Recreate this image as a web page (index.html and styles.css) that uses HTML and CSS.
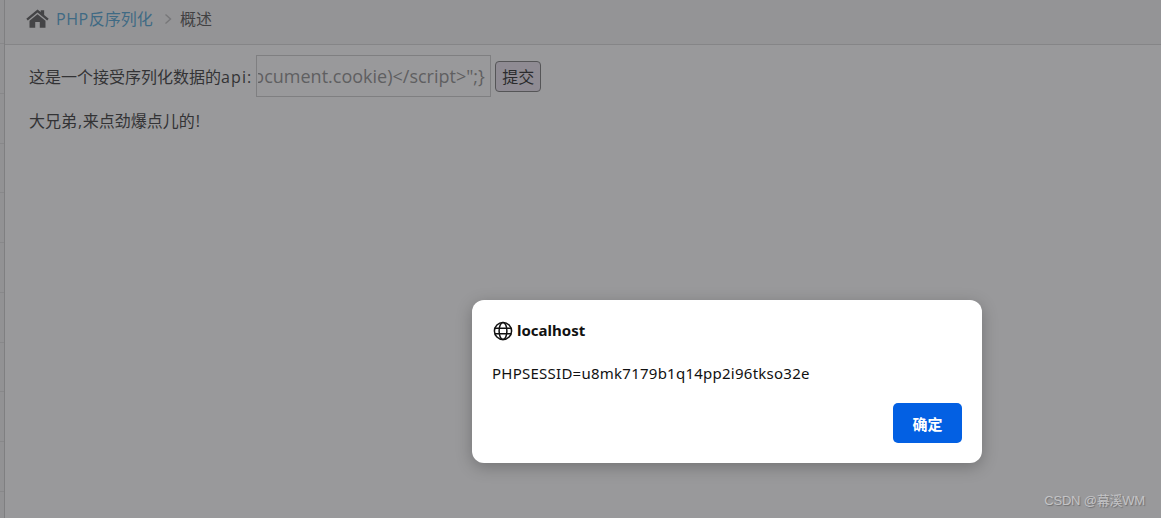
FILE: index.html
```html
<!DOCTYPE html>
<html lang="zh">
<head>
<meta charset="utf-8">
<title>PHP反序列化</title>
<link rel="stylesheet" href="styles.css">
</head>
<body>
<div class="page">
  <aside class="side">
    <div class="tick t1"></div><div class="tick"></div><div class="tick"></div><div class="tick"></div><div class="tick"></div><div class="tick"></div><div class="tick"></div><div class="tick"></div><div class="tick"></div><div class="tick"></div>
  </aside>
  <main class="main">
    <nav class="crumbs">
      <svg class="home" viewBox="0 0 24 20" width="23" height="19"><path fill="#444446" d="M12 0.4 L15.4 3.2 V1.2 H19 V6.2 L23.8 10.2 L22.2 12.2 L12 3.7 L1.8 12.2 L0.2 10.2 Z M12 5.4 L20.4 12.4 V19.8 H14.4 V13.8 H9.6 V19.8 H3.6 V12.4 Z"/></svg>
      <a class="link"><span class="php">PHP</span>反序列化</a>
      <svg class="chev" viewBox="0 0 8 12" width="8" height="12"><path d="M1.5 1.5 L6.5 6 L1.5 10.5" fill="none" stroke="#777779" stroke-width="1.4"/></svg>
      <span class="current">概述</span>
    </nav>
    <section class="content">
      <form class="api-form">
        <label class="api-label">这是一个接受序列化数据的<span class="wide">api:</span></label>
        <input class="api-input" type="text" readonly value='ocument.cookie)&lt;/script&gt;";}'>
        <button type="button" class="submit">提交</button>
      </form>
      <p class="msg">大兄弟<span class="punct">,</span>来点劲爆点儿的<span class="punct">!</span></p>
    </section>
  </main>
</div>
<div class="dialog">
  <div class="dialog-head">
    <svg class="globe" viewBox="0 0 20 20" width="20" height="20"><g fill="none" stroke="#111" stroke-width="1.5"><circle cx="10" cy="10" r="8.6"/><ellipse cx="10" cy="10" rx="3.9" ry="8.6"/><path d="M1.8 7.2 H18.2 M1.8 12.8 H18.2"/></g></svg>
    <span class="host">localhost</span>
  </div>
  <div class="dialog-msg">PHPSESSID=u8mk7179b1q14pp2i96tkso32e</div>
  <div class="dialog-foot"><button type="button" class="ok">确定</button></div>
</div>
<div class="mark">CSDN @幕溪WM</div>
</body>
</html>
```
FILE: styles.css
```css
* { box-sizing: border-box; }
html, body { margin: 0; height: 100%; overflow: hidden; }
body {
  background: #99999b;
  font-family: "Open Sans", "Noto Sans CJK SC", sans-serif;
  font-size: 16px;
  color: #333335;
}
.page { display: flex; height: 518px; }
.side {
  width: 5px;
  flex: none;
  background: #929294;
  border-right: 1px solid #7f7f81;
  display: flex;
  flex-direction: column;
}
.tick { height: 49.75px; flex: none; border-bottom: 1px solid #88888a; }
.tick.t1 { height: 44px; }
.main { flex: 1; min-width: 0; }
.crumbs {
  height: 45px;
  background: #949496;
  border-bottom: 1px solid #858587;
  display: flex;
  align-items: center;
  padding: 0 0 8px 21px;
}
.home { margin-right: 7px; margin-top: 1px; }
.link { color: #3f6a84; }
.php { letter-spacing: .6px; }
.wide { letter-spacing: 1.1px; }
.chev { margin: 2px 8px 0 11px; }
.current { color: #414143; }
.content { padding: 10px 0 0 24px; }
.api-form { display: flex; align-items: center; height: 42px; }
.api-label { margin-right: 4px; white-space: nowrap; }
.api-input {
  width: 235px;
  height: 42px;
  border: 1px solid #7f7f81;
  background: transparent;
  padding: 0 5px 0 1px;
  margin: 0;
  outline: 0;
  text-indent: -5px;
  font-family: "Open Sans", sans-serif;
  font-size: 18px;
  color: #5f5f61;
}
.submit {
  margin-left: 4px;
  width: 46px;
  height: 31px;
  padding: 0;
  background: #8f8b93;
  border: 1px solid #555557;
  border-radius: 4px;
  font: inherit;
  color: #2b2b2d;
}
.msg { margin: 13px 0 0 0; line-height: 22px; }
.punct { padding-left: 1px; letter-spacing: .5px; }
.dialog {
  position: absolute;
  left: 472px;
  top: 300px;
  width: 510px;
  height: 163px;
  background: #fff;
  border-radius: 12px;
  box-shadow: 0 4px 16px rgba(0,0,0,.25);
  padding: 20px 20px 20px;
  display: flex;
  flex-direction: column;
  font-family: "Noto Sans", "Noto Sans CJK SC", sans-serif;
  color: #111;
}
.dialog-head { display: flex; align-items: center; height: 20px; margin-top: 1px; }
.globe { margin: 0 4px 0 1px; }
.host { font-size: 15px; font-weight: 700; position: relative; top: -1px; }
.dialog-msg { margin-top: 22px; font-size: 15px; line-height: 20px; letter-spacing: .25px; }
.dialog-foot { margin-top: auto; display: flex; justify-content: flex-end; }
.ok {
  width: 69px;
  height: 40px;
  border: 0;
  padding: 0;
  border-radius: 5px;
  background: #0360e3;
  color: #fff;
  font: 700 15px "Noto Sans CJK SC", sans-serif;
}
.mark {
  position: absolute;
  right: 16px;
  bottom: 9px;
  font: 13px "Liberation Sans", "Noto Sans CJK SC", sans-serif;
  letter-spacing: -.2px;
  color: #c4c4c6;
  text-shadow: 1px 1px 1px #6f6f71;
}
```
